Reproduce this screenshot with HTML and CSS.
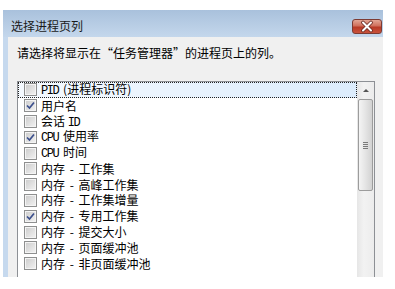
FILE: index.html
```html
<!DOCTYPE html>
<html lang="zh-CN">
<head>
<meta charset="utf-8">
<title>选择进程页列</title>
<link rel="stylesheet" href="styles.css">
</head>
<body>
<div class="win">
  <div class="title">
    <span class="ttext">选择进程页列</span>
    <div class="close">
      <svg width="30" height="15" viewBox="0 0 30 15">
        <path d="M11 3.5 L19 11.5 M19 3.5 L11 11.5" stroke="#6a2a22" stroke-width="3.6" stroke-linecap="round"/>
        <path d="M11 3.5 L19 11.5 M19 3.5 L11 11.5" stroke="#ffffff" stroke-width="2" stroke-linecap="round"/>
      </svg>
    </div>
  </div>
  <div class="body">
    <p class="intro">请选择将显示在“任务管理器”的进程页上的列。</p>
    <div class="list">
      <div class="items">
        <div class="row focus"><span class="cb"></span><span class="lbl"><span class="lat">PID</span> (进程标识符)</span></div>
        <div class="row"><span class="cb on"><svg width="11" height="11" viewBox="0 0 11 11"><path d="M2 5.5 L4.5 8 L9 2.5" fill="none" stroke="#3b4f8c" stroke-width="1.7"/></svg></span><span class="lbl">用户名</span></div>
        <div class="row"><span class="cb"></span><span class="lbl">会话 <span class="lat">ID</span></span></div>
        <div class="row"><span class="cb on"><svg width="11" height="11" viewBox="0 0 11 11"><path d="M2 5.5 L4.5 8 L9 2.5" fill="none" stroke="#3b4f8c" stroke-width="1.7"/></svg></span><span class="lbl"><span class="lat">CPU</span> 使用率</span></div>
        <div class="row"><span class="cb"></span><span class="lbl"><span class="lat">CPU</span> 时间</span></div>
        <div class="row"><span class="cb"></span><span class="lbl mem">内存 - 工作集</span></div>
        <div class="row"><span class="cb"></span><span class="lbl mem">内存 - 高峰工作集</span></div>
        <div class="row"><span class="cb"></span><span class="lbl mem">内存 - 工作集增量</span></div>
        <div class="row"><span class="cb on"><svg width="11" height="11" viewBox="0 0 11 11"><path d="M2 5.5 L4.5 8 L9 2.5" fill="none" stroke="#3b4f8c" stroke-width="1.7"/></svg></span><span class="lbl mem">内存 - 专用工作集</span></div>
        <div class="row"><span class="cb"></span><span class="lbl mem">内存 - 提交大小</span></div>
        <div class="row"><span class="cb"></span><span class="lbl mem">内存 - 页面缓冲池</span></div>
        <div class="row"><span class="cb"></span><span class="lbl mem">内存 - 非页面缓冲池</span></div>
      </div>
      <div class="sb">
        <div class="sb-up"><span class="tri"></span></div>
        <div class="thumb"><span class="grip"></span></div>
        <div class="track"></div>
      </div>
    </div>
  </div>
</div>
</body>
</html>
```
FILE: styles.css
```css
html, body {
  margin: 0;
  padding: 0;
  background: #ffffff;
}
body {
  font-family: "Noto Sans CJK SC", "Noto Sans", sans-serif;
  font-size: 12px;
  color: #000;
}
.win {
  margin: 10px 0 0 3px;
  width: 380px;
  height: 267px;
  overflow: hidden;
  display: flex;
  flex-direction: column;
}
.title {
  height: 27px;
  box-sizing: border-box;
  padding: 5px 1px 0 8px;
  display: flex;
  align-items: center;
  justify-content: space-between;
  background: linear-gradient(to bottom, #a9c1dc, #c4d7ec);
}
.ttext {
  font-size: 12px;
  line-height: 14px;
  color: #1a1a1a;
}
.close {
  width: 30px;
  height: 15px;
  box-sizing: border-box;
  border: 1px solid #7c3b33;
  border-radius: 3px;
  background: linear-gradient(to bottom, #e3a695 0%, #d0705c 45%, #b83a26 55%, #c9523c 100%);
  display: flex;
  align-items: center;
  justify-content: center;
  overflow: hidden;
}
.close svg {
  display: block;
  flex: none;
}
.body {
  flex: 1;
  background: #f0f0f0;
  border-left: 5px solid #c6d9ee;
  padding: 9px 8px 0 9px;
  display: flex;
  flex-direction: column;
  min-height: 0;
}
.intro {
  margin: 0;
  line-height: 14px;
  font-size: 12px;
}
.list {
  margin-top: 21px;
  width: 358px;
  height: 220px;
  flex: none;
  box-sizing: border-box;
  border: 1px solid #8d9095;
  background: #fff;
  display: flex;
}
.items {
  flex: 1;
  min-width: 0;
}
.row {
  height: 15.8px;
  display: flex;
  align-items: center;
  padding-left: 6px;
  box-sizing: border-box;
}
.row.focus {
  outline: 1px dotted #222;
  outline-offset: -1px;
  background: linear-gradient(to right, #f5faff, #dcecfc);
}
.cb {
  width: 13px;
  height: 13px;
  box-sizing: border-box;
  border: 1px solid #8e8f8f;
  box-shadow: inset 0 0 0 1px #f4f4f4;
  background: linear-gradient(135deg, #cbcbcb, #f3f3f3);
  display: flex;
  align-items: center;
  justify-content: center;
  flex: none;
}
.cb svg {
  display: block;
}
.lbl {
  margin-left: 4px;
  line-height: 14px;
  white-space: nowrap;
}
.lbl.mem {
  word-spacing: 2px;
}
.lat {
  font-family: "Liberation Mono", monospace;
  font-size: 12px;
  letter-spacing: -1.4px;
  margin-right: 2px;
}
.sb {
  width: 17px;
  flex: none;
  display: flex;
  flex-direction: column;
  background: linear-gradient(to right, #e6e6e6, #f2f2f2 40%, #ececec);
}
.sb-up {
  height: 17px;
  display: flex;
  align-items: center;
  justify-content: center;
}
.tri {
  width: 0;
  height: 0;
  border-left: 3px solid transparent;
  border-right: 3px solid transparent;
  border-bottom: 3px solid #555;
}
.thumb {
  height: 92px;
  box-sizing: border-box;
  margin: 0 1px;
  border: 1px solid #9c9c9c;
  border-radius: 2px;
  background: linear-gradient(to right, #f4f4f4, #e4e4e4 50%, #d2d2d2);
  display: flex;
  align-items: center;
  justify-content: center;
}
.grip {
  width: 5px;
  height: 7px;
  background: repeating-linear-gradient(to bottom, #7a7a7a 0, #7a7a7a 1px, transparent 1px, transparent 2px);
}
.track {
  flex: 1;
}
```
